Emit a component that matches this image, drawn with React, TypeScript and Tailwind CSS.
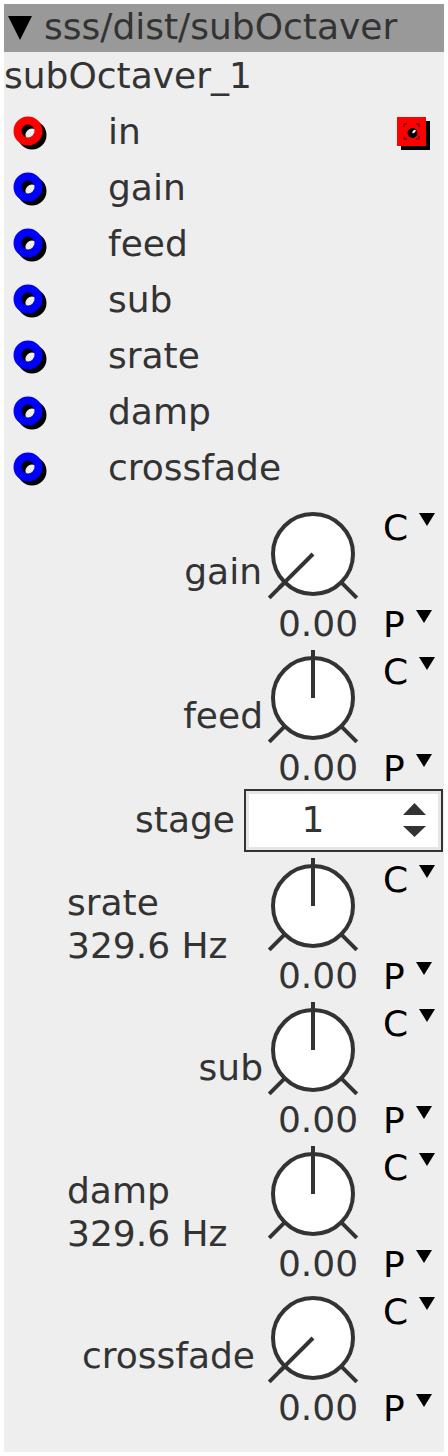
import React from "react";

const ports = ["in", "gain", "feed", "sub", "srate", "damp", "crossfade"];

function Port({ color }: { color: string }) {
    return (
        <svg width="36" height="36" viewBox="0 0 36 36">
            <circle cx="19" cy="19" r="10.5" fill="none" stroke="#000" strokeWidth="8" />
            <circle cx="15" cy="15" r="10.5" fill="none" stroke={color} strokeWidth="8" />
        </svg>
    );
}

function Jack() {
    return (
        <svg width="36" height="36" viewBox="0 0 36 36">
            <rect x="4" y="4" width="29" height="29" fill="#000" />
            <rect x="0" y="0" width="29" height="29" fill="#ff0000" />
            <path d="M7 10V7h3M19 7h3v3M7 19v3h3M22 19v3h-3" fill="none" stroke="#400" strokeWidth="1" />
            <circle cx="15.5" cy="16" r="5" fill="#000" />
            <ellipse cx="17" cy="14.5" rx="2.2" ry="1.2" fill="#fff" transform="rotate(-45 17 14.5)" />
        </svg>
    );
}

function Knob({ angle }: { angle: number }) {
    const a = (angle * Math.PI) / 180;
    const x = 50 + 48 * Math.sin(a);
    const y = 50 - 48 * Math.cos(a);
    return (
        <svg width="100" height="100" viewBox="0 0 100 100">
            <line x1="21.7" y1="78.3" x2="6.2" y2="93.8" stroke="#333" strokeWidth="4" />
            <line x1="78.3" y1="78.3" x2="93.8" y2="93.8" stroke="#333" strokeWidth="4" />
            <circle cx="50" cy="50" r="40" fill="#fff" stroke="#333" strokeWidth="4" />
            <line x1="50" y1="50" x2={x} y2={y} stroke="#333" strokeWidth="4" />
        </svg>
    );
}

function Caret() {
    return (
        <svg width="16" height="14" viewBox="0 0 16 14" className="shrink-0 mt-[3px] ml-[11px]">
            <polygon points="0,0 16,0 8,13" fill="#000" />
        </svg>
    );
}

interface KnobRowProps {
    label: string;
    freq?: string;
    angle: number;
    pr?: string;
}

function KnobRow({ label, freq, angle, pr }: KnobRowProps) {
    return (
        <div className="flex h-[144px]">
            {freq ? (
                <div className="w-[259px] shrink-0 flex flex-col justify-center pl-[63px] leading-[43px]">
                    <span>{label}</span>
                    <span>{freq}</span>
                </div>
            ) : (
                <div className={`w-[259px] shrink-0 flex items-center justify-end leading-none ${pr ?? ""}`}>
                    <span>{label}</span>
                </div>
            )}
            <div className="w-[110px] shrink-0 flex flex-col">
                <div className="mt-[4px]">
                    <Knob angle={angle} />
                </div>
                <div className="mt-[2px] leading-none text-center">0.00</div>
            </div>
            <div className="flex flex-col pl-[10px] pt-[10px] text-black leading-none">
                <div className="flex items-start h-[36px]">
                    <span>C</span>
                    <Caret />
                </div>
                <div className="flex items-start h-[36px] mt-[61px]">
                    <span>P</span>
                    <Caret />
                </div>
            </div>
        </div>
    );
}

export default function App() {
    return (
        <div className="bg-white p-[4px] font-['DejaVu_Sans',sans-serif] text-[36px] text-[#333]">
            <div className="bg-[#eeeeee] h-[1448px] flex flex-col">
                <div className="h-[48px] bg-[#999999] flex items-center pb-[3px]">
                    <svg width="24" height="24" viewBox="0 0 24 24" className="shrink-0 ml-[4px] mt-[2px]">
                        <polygon points="0,0 24,0 12,24" fill="#000" />
                    </svg>
                    <span className="ml-[12px] leading-none">sss/dist/subOctaver</span>
                </div>

                <div className="h-[52px] flex items-center pb-[5px] leading-none">
                    <span>subOctaver_1</span>
                </div>

                {ports.map((name, i) => (
                    <div key={name} className="h-[56px] flex items-start">
                        <div className="w-[104px] shrink-0 pl-[8.5px] pt-[12px]">
                            <Port color={i === 0 ? "#ff0000" : "#0000ff"} />
                        </div>
                        <span className="leading-none mt-[10px]">{name}</span>
                        {i === 0 && (
                            <div className="ml-auto mr-[11px] pt-[13px]">
                                <Jack />
                            </div>
                        )}
                    </div>
                ))}

                <div className="h-[4px]" />

                <KnobRow label="gain" angle={-135} pr="pr-[1px]" />
                <KnobRow label="feed" angle={0} />

                <div className="h-[64px] flex items-center justify-end pr-[1px]">
                    <span className="leading-none">stage</span>
                    <div className="ml-[9px] w-[199px] h-[63px] border-2 border-[#333]">
                        <div className="h-full border-[3px] border-[#e6e6e6] bg-white flex items-center">
                            <div className="w-[128px] text-center leading-none">1</div>
                            <svg width="23" height="34" viewBox="0 0 23 34" className="shrink-0 ml-[26px]">
                                <polygon points="0,12 11.5,0 23,12" fill="#333" />
                                <polygon points="0,23 23,23 11.5,34" fill="#333" />
                            </svg>
                        </div>
                    </div>
                </div>

                <KnobRow label="srate" freq="329.6 Hz" angle={0} />
                <KnobRow label="sub" angle={0} />
                <KnobRow label="damp" freq="329.6 Hz" angle={0} />
                <KnobRow label="crossfade" angle={-135} pr="pr-[8px]" />
            </div>
        </div>
    );
}
